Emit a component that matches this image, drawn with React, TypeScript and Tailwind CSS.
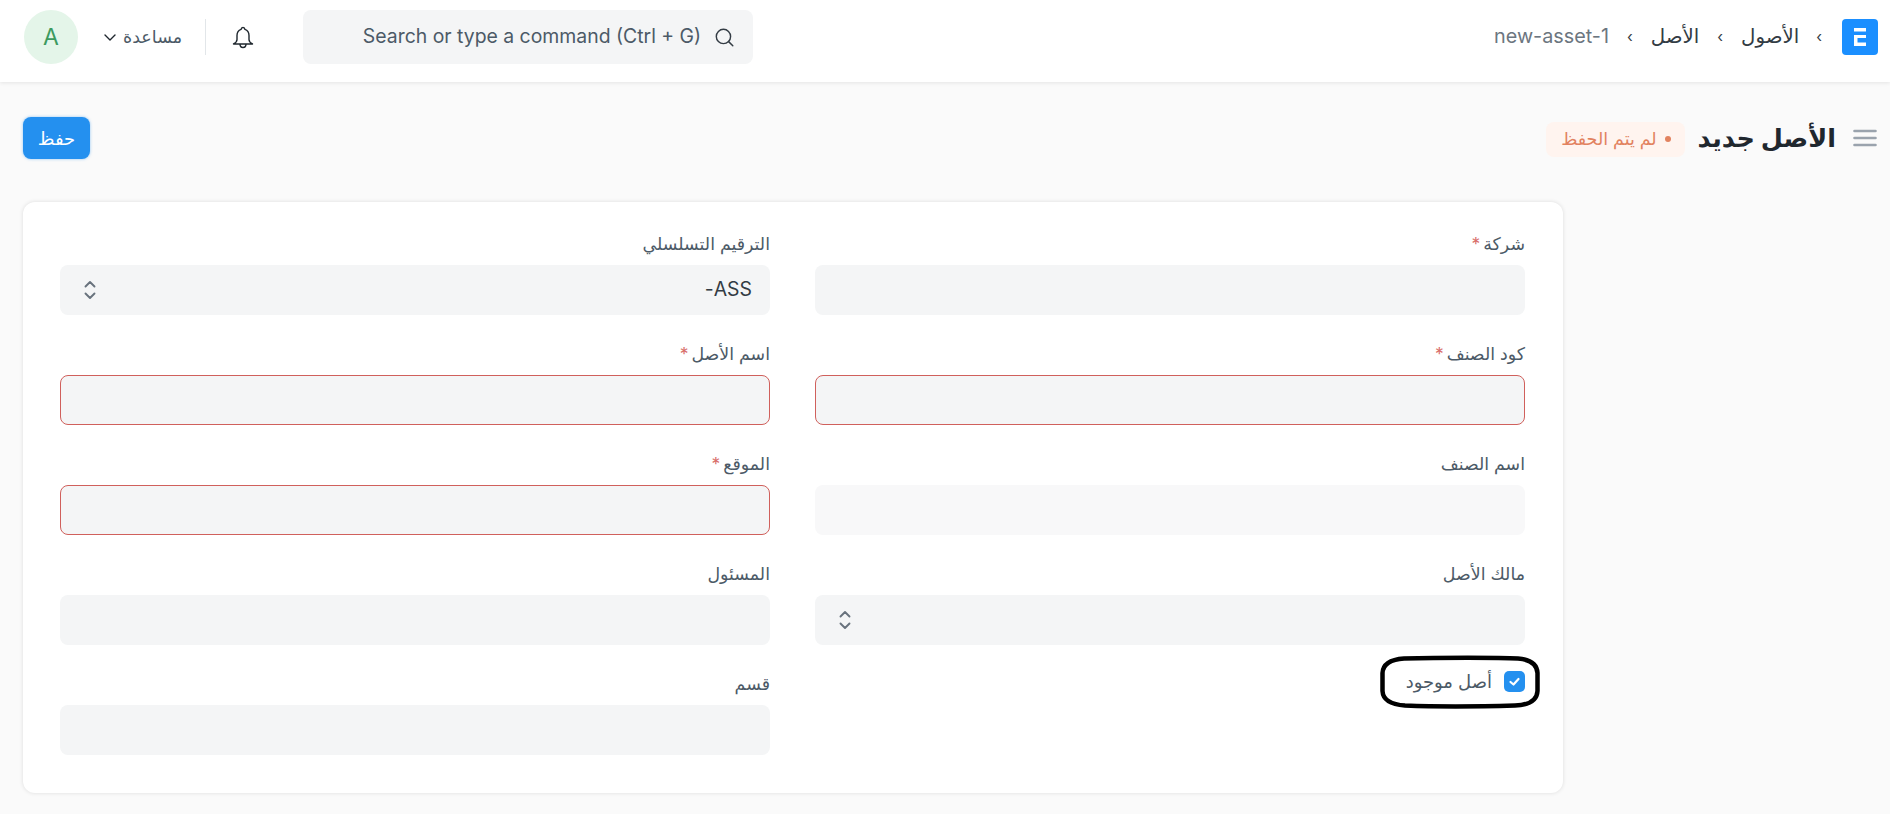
const Chevrons = () => (
  <svg width="14" height="24" viewBox="0 0 14 24" fill="none" stroke="#68727d" strokeWidth="1.900" strokeLinecap="round" strokeLinejoin="round">
    <path d="M2.500 8.500 7 4l4.500 4.500" />
    <path d="M2.500 15.500 7 20l4.500-4.500" />
  </svg>
);

const Req = () => <span className="mr-[3px] text-[#d9706c]">*</span>;

type FieldProps = { label: string; req?: boolean; error?: boolean; light?: boolean; select?: boolean; value?: string };

const Field = ({ label, req, error, light, select, value }: FieldProps) => (
  <div className="h-[110px]">
    <div className="h-[23px] mb-[10px] text-[17.4px] leading-[23px] text-[#4c5a67]">
      {label}
      {req && <Req />}
    </div>
    <div
      className={
        "h-[50px] rounded-[8px] flex items-center justify-between pr-[18px] pl-[23px] text-[19.4px] text-[#333c44] " +
        (light ? "bg-[#f8f8f9] " : "bg-[#f4f5f6] ") +
        (error ? "border border-[#d0605c]" : "")
      }
    >
      <span>{value}</span>
      {select && <Chevrons />}
    </div>
  </div>
);

export default function App() {
  return (
    <div dir="rtl" className="min-h-screen bg-[#fafafa] font-['Inter','DejaVu_Sans',sans-serif] relative">
      <header className="h-[82px] pb-[8px] bg-white shadow-[0_1px_4px_rgba(0,0,0,0.09)] flex items-center justify-between pr-[12px] pl-[24px]">
        <nav className="flex items-center text-[19.8px] text-[#333c44]">
          <div className="w-[36px] h-[36px] rounded-[4px] bg-[#1b8fff] flex items-center justify-center">
            <svg width="12" height="18" viewBox="0 0 12 18" fill="#fff">
              <path d="M0 0h12v3.500H0zM0 7h12v3H3.500v4.500H12V18H0z" />
            </svg>
          </div>
          <span className="mr-[20px] text-[15px]">›</span>
          <span className="mr-[17px]">الأصول</span>
          <span className="mr-[18px] text-[15px]">›</span>
          <span className="mr-[18px]">الأصل</span>
          <span className="mr-[18px] text-[15px]">›</span>
          <span className="mr-[18px] text-[#6c7680]">new-asset-1</span>
        </nav>
        <div className="flex items-center">
          <div dir="ltr" className="w-[450px] h-[54px] rounded-[8px] bg-[#f4f5f6] flex items-center justify-end pr-[18px] gap-[12px] text-[19.4px] text-[#4c5a67]">
            <span>Search or type a command (Ctrl + G)</span>
            <svg width="22" height="22" viewBox="0 0 20 20" fill="none" stroke="#333c44" strokeWidth="1.300" strokeLinecap="round">
              <circle cx="9.500" cy="9.500" r="6.500" />
              <path d="M14.200 14.200 18 18" />
            </svg>
          </div>
          <svg className="mr-[49px]" width="22" height="23" viewBox="0 0 22 23" fill="none" stroke="#1f272e" strokeWidth="1.400" strokeLinejoin="round">
            <path d="M11 1.500c-1.200 0-1.800.8-1.900 1.900C6.500 4.300 5 6.500 5 9.500v4c0 2-1.500 3.500-3.500 4.500h19c-2-1-3.500-2.500-3.500-4.500v-4c0-3-1.500-5.200-4.100-6.100C12.800 2.300 12.200 1.500 11 1.500z" />
            <path d="M8 18c0 2.200 1.300 3.500 3 3.500s3-1.300 3-3.500" />
          </svg>
          <div className="mr-[26px] w-px h-[36px] bg-[#e2e6e9]" />
          <div className="mr-[23px] flex items-center gap-[6px] text-[17.5px] text-[#4c5a67]">
            <span>مساعدة</span>
            <svg width="14" height="14" viewBox="0 0 14 14" fill="none" stroke="#1f272e" strokeWidth="1.400" strokeLinecap="round" strokeLinejoin="round">
              <path d="M2 5l5 5 5-5" />
            </svg>
          </div>
          <div className="mr-[25px] w-[54px] h-[54px] rounded-full bg-[#e4f5e9] text-[#3d9a5f] text-[23px] flex items-center justify-center">A</div>
        </div>
      </header>

      <div className="h-[120px] pb-[8px] flex items-center justify-between pr-[13px] pl-[23px]">
        <div className="flex items-center">
          <svg width="24" height="18" viewBox="0 0 24 18" stroke="#9aa3ad" strokeWidth="2.600" strokeLinecap="round">
            <path d="M1.500 2h21M1.500 9h21M1.500 16h21" />
          </svg>
          <h1 className="mr-[17px] text-[25.500px] font-bold text-[#1f272e]">الأصل جديد</h1>
          <div className="mr-[12px] mt-[2px] h-[35px] w-[139px] rounded-[8px] bg-[#fff4ef] text-[#e2825f] text-[17.500px] flex items-center justify-center gap-[8px]">
            <span className="w-[6px] h-[6px] rounded-full bg-[#e2825f]" />
            <span>لم يتم الحفظ</span>
          </div>
        </div>
        <button className="w-[67px] h-[42px] rounded-[8px] bg-[#2490ef] text-white text-[18px] shadow-[0_0_3px_rgba(36,144,239,0.5)]">حفظ</button>
      </div>

      <main className="mr-[327px] ml-[23px] h-[591px] rounded-[12px] bg-white shadow-[0_0_4px_rgba(0,0,0,0.12)] pt-[30px] pr-[38px] pl-[37px]">
        <div className="grid grid-cols-2 gap-x-[45px]">
          <Field label="شركة" req />
          <Field label="الترقيم التسلسلي" select value="ASS-" />
          <Field label="كود الصنف" req error />
          <Field label="اسم الأصل" req error />
          <Field label="اسم الصنف" light />
          <Field label="الموقع" req error />
          <Field label="مالك الأصل" select />
          <Field label="المسئول" />
          <div className="h-[110px]">
            <div className="relative -mt-[1px] h-[21px] flex items-center gap-[12px] text-[18px] text-[#4c5a67]">
              <span className="w-[21px] h-[21px] rounded-[5px] bg-[#2490ef] flex items-center justify-center">
                <svg width="13" height="13" viewBox="0 0 13 13" fill="none" stroke="#fff" strokeWidth="2.200" strokeLinecap="round" strokeLinejoin="round">
                  <path d="M2.500 7l3 2.500 5-5.500" />
                </svg>
              </span>
              <span>أصل موجود</span>
              <svg className="absolute -top-[16px] -right-[15px]" width="160" height="54" viewBox="0 0 160 54" fill="none" stroke="#000" strokeWidth="4.500">
                <path d="M24 3.500C60 2.500 120 2.500 138 3.500C151 4.500 157 10 157.500 18L157.500 36C157 45 150 50 135 50.500C100 51.500 50 51.500 25 50.500C10 49.500 3 45 2.500 36L2.500 18C3 9 10 4.500 24 3.500Z" />
              </svg>
            </div>
          </div>
          <Field label="قسم" />
        </div>
      </main>
    </div>
  );
}
